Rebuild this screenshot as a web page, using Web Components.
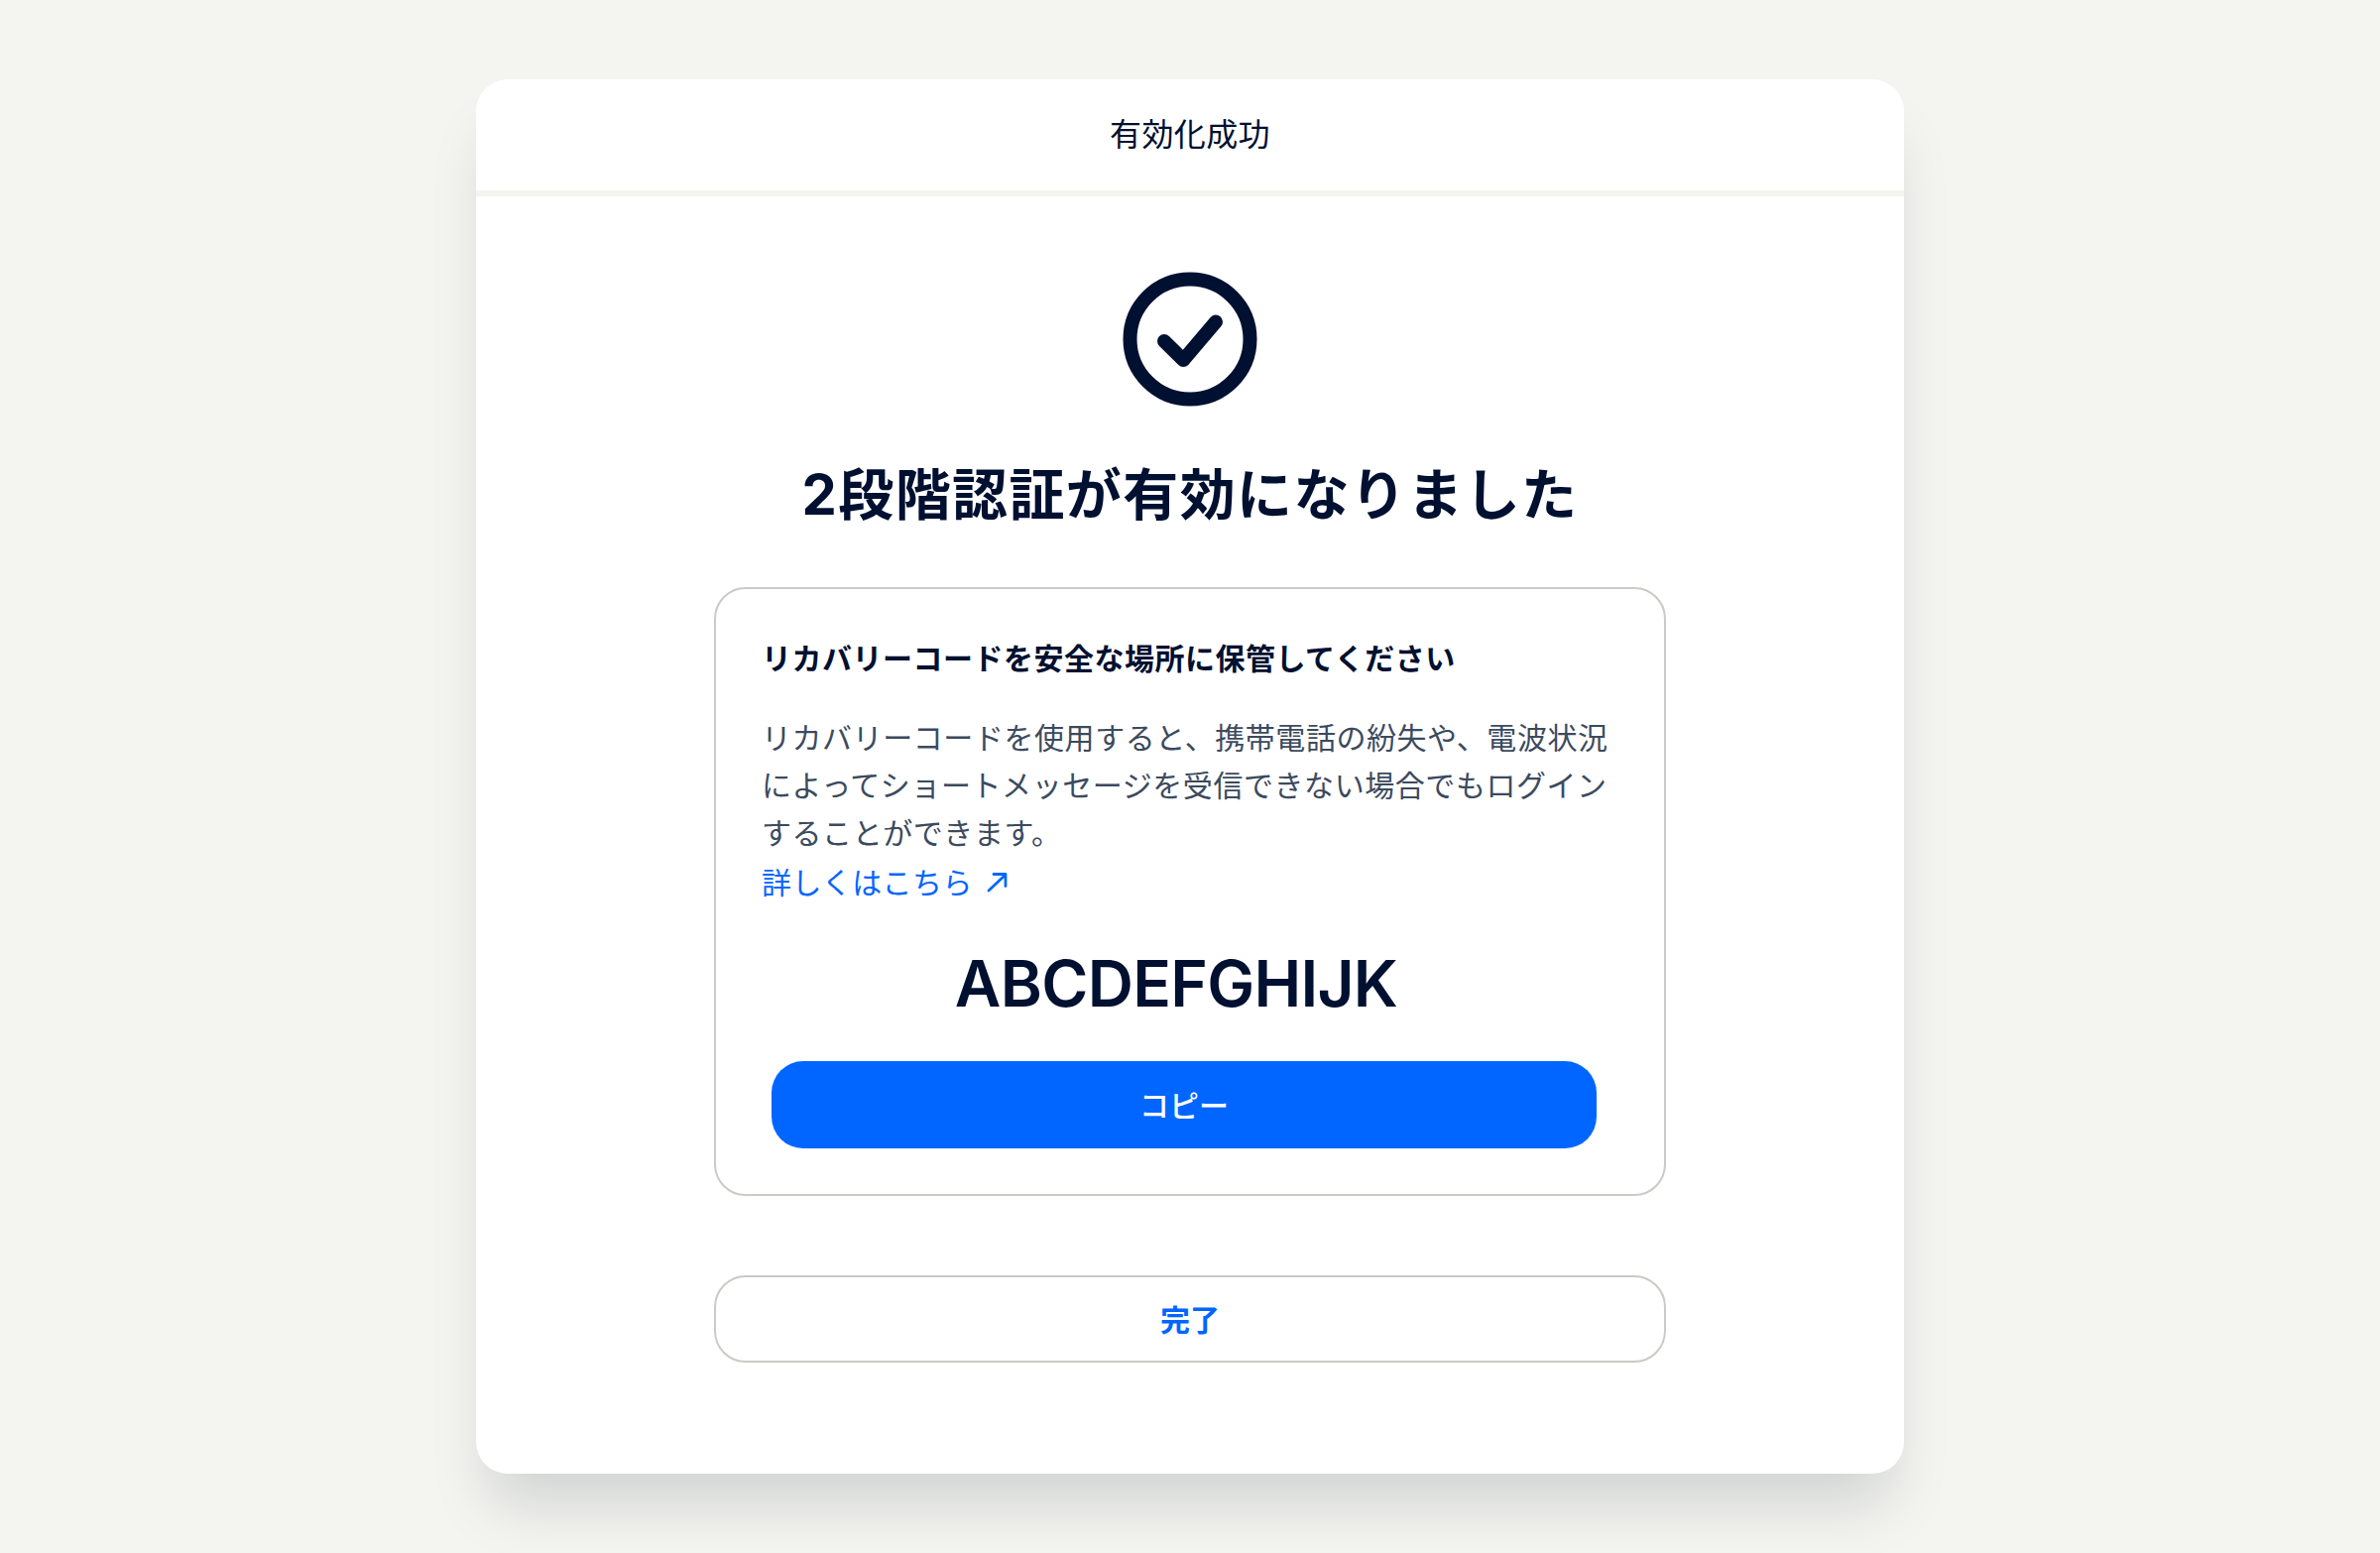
<!DOCTYPE html>
<html lang="ja">
<head>
<meta charset="utf-8">
<title>有効化成功</title>
<style>
  html, body { margin: 0; padding: 0; background: #f4f5f0; }
  body {
    height: 1566px;
    overflow: hidden;
    font-family: Inter, "Noto Sans CJK JP", sans-serif;
    color: #001030;
  }
</style>
</head>
<body>
<success-page heading="有効化成功">
  <check-icon></check-icon>
  <page-heading>2段階認証が有効になりました</page-heading>
  <recovery-box code="ABCDEFGHIJK" link="詳しくはこちら">
    <span slot="title">リカバリーコードを安全な場所に保管してください</span>
    リカバリーコードを使用すると、携帯電話の紛失や、電波状況によってショートメッセージを受信できない場合でもログインすることができます。
  </recovery-box>
  <action-button variant="outline">完了</action-button>
</success-page>

<script>
// Tarjeta principal con su cabecera
class SuccessPage extends HTMLElement {
    constructor() {
        super();
        this.attachShadow({ mode: 'open' }).innerHTML = `
        <style>
            :host {
                display: block;
                box-sizing: border-box;
                width: 1440px;
                height: 1406px;
                margin: 80px auto 0;
                background: #ffffff;
                border-radius: 32px;
                box-shadow: 0 44px 60px -14px rgba(0, 16, 48, 0.145);
            }
            header {
                box-sizing: border-box;
                height: 118px;
                padding-bottom: 7px;
                display: flex;
                align-items: center;
                justify-content: center;
                border-bottom: 6px solid #f4f5f0;
                font-size: 32px;
                letter-spacing: 0.4px;
            }
            main {
                display: flex;
                flex-direction: column;
                align-items: center;
                padding-top: 64px;
            }
        </style>
        <header></header>
        <main><slot></slot></main>`;
        this.shadowRoot.querySelector('header').textContent = this.getAttribute('heading');
    }
}
customElements.define('success-page', SuccessPage);

// Icono de check dentro de un circulo
class CheckIcon extends HTMLElement {
    constructor() {
        super();
        this.attachShadow({ mode: 'open' }).innerHTML = `
        <style>
            :host { display: block; width: 160px; height: 160px; }
            svg { display: block; }
        </style>
        <svg width="160" height="160" viewBox="0 0 160 160" fill="none" stroke="#001030" stroke-width="14" stroke-linecap="round" stroke-linejoin="round">
            <circle cx="80" cy="80" r="60.5"/>
            <path d="M54 82 73.300 101 106 62.500"/>
        </svg>`;
    }
}
customElements.define('check-icon', CheckIcon);

// Titulo grande
class PageHeading extends HTMLElement {
    constructor() {
        super();
        this.attachShadow({ mode: 'open' }).innerHTML = `
        <style>
            :host {
                display: block;
                margin: 37px 0 53px;
                font-size: 56px;
                line-height: 80px;
                font-weight: 700;
                letter-spacing: 1.4px;
                white-space: nowrap;
            }
        </style>
        <slot></slot>`;
    }
}
customElements.define('page-heading', PageHeading);

// Caja con la explicacion y el codigo de recuperacion
class RecoveryBox extends HTMLElement {
    constructor() {
        super();
        this.attachShadow({ mode: 'open' }).innerHTML = `
        <style>
            :host {
                display: block;
                box-sizing: border-box;
                width: 960px;
                height: 614px;
                padding: 48px 46px 0;
                border: 2px solid #c8cbc6;
                border-radius: 32px;
            }
            h2 {
                margin: 0;
                font-size: 30px;
                line-height: 44px;
                font-weight: 700;
                letter-spacing: 0.5px;
            }
            p {
                margin: 34px 0 0;
                font-size: 30px;
                line-height: 48px;
                letter-spacing: 0.56px;
                color: #3c4a5e;
            }
            a {
                display: flex;
                align-items: center;
                gap: 12px;
                margin-top: 2px;
                font-size: 30px;
                line-height: 48px;
                letter-spacing: 0.4px;
                color: #0066ff;
                text-decoration: none;
            }
            a svg { display: block; }
            .code {
                margin: 38px 28px 38px 0;
                font-size: 64px;
                line-height: 80px;
                font-weight: 600;
                letter-spacing: -0.7px;
                text-align: center;
            }
            action-button { margin: 0 22px 0 10px; }
        </style>
        <h2><slot name="title"></slot></h2>
        <p><slot></slot></p>
        <a href="#"><span id="link"></span>
            <svg width="24" height="24" viewBox="0 0 24 24" fill="none" stroke="#0066ff" stroke-width="2.800" stroke-linecap="round" stroke-linejoin="round">
                <path d="M4 20 21 4M9 3.500h12v12"/>
            </svg>
        </a>
        <div class="code"></div>
        <action-button variant="solid">コピー</action-button>`;
        this.shadowRoot.querySelector('#link').textContent = this.getAttribute('link');
        this.shadowRoot.querySelector('.code').textContent = this.getAttribute('code');
    }
}
customElements.define('recovery-box', RecoveryBox);

// Boton, relleno o con borde
class ActionButton extends HTMLElement {
    constructor() {
        super();
        this.attachShadow({ mode: 'open' }).innerHTML = `
        <style>
            :host { display: block; }
            :host([variant="outline"]) { width: 960px; margin-top: 80px; }
            button {
                display: block;
                box-sizing: border-box;
                width: 100%;
                height: 88px;
                padding: 0 0 3px;
                border-radius: 32px;
                font-family: inherit;
                font-size: 30px;
                cursor: pointer;
            }
            :host([variant="solid"]) button {
                background: #0066ff;
                border: none;
                color: #ffffff;
                font-weight: 500;
            }
            :host([variant="outline"]) button {
                background: #ffffff;
                border: 2px solid #c8cbc6;
                color: #0066ff;
                font-weight: 700;
            }
        </style>
        <button><slot></slot></button>`;
    }
}
customElements.define('action-button', ActionButton);
</script>
</body>
</html>
